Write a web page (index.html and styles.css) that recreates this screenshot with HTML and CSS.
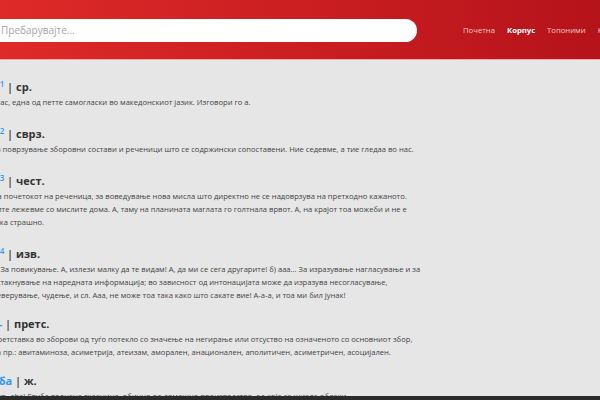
FILE: index.html
```html
<!DOCTYPE html>
<html lang="mk">
<head>
    <meta charset="UTF-8">
    <meta name="viewport" content="width=device-width, initial-scale=1.0">
    <title>Корпус</title>
    <link rel="stylesheet" href="styles.css">
</head>
<body>
    <div class="page">
        <!-- Top bar -->
        <header class="topbar">
            <div class="search">
                <input type="text" placeholder="Пребарувајте...">
            </div>
            <nav class="menu">
                <a href="#">Почетна</a>
                <a href="#" class="active">Корпус</a>
                <a href="#">Топоними</a>
                <a href="#">Контакт</a>
            </nav>
        </header>

        <!-- Dictionary entries -->
        <main class="entries">
            <div class="entry">
                <h3><span class="word">а<sup>1</sup></span> <span class="bar">|</span> ср.</h3>
                <p>Глас, една од петте самогласки во македонскиот јазик. Изговори го а.</p>
            </div>
            <div class="entry">
                <h3><span class="word">а<sup>2</sup></span> <span class="bar">|</span> сврз.</h3>
                <p>За поврзување зборовни состави и реченици што се содржински сопоставени. Ние седевме, а тие гледаа во нас.</p>
            </div>
            <div class="entry">
                <h3><span class="word">а<sup>3</sup></span> <span class="bar">|</span> чест.</h3>
                <p>На почетокот на реченица, за воведување нова мисла што директно не се надоврзува на претходно кажаното. Сите лежевме со мислите дома. А, таму на планината маглата го голтнала врвот. А, на крајот тоа можеби и не е така страшно.</p>
            </div>
            <div class="entry">
                <h3><span class="word">а<sup>4</sup></span> <span class="bar">|</span> изв.</h3>
                <p>а) За повикување. А, излези малку да те видам! А, да ми се сега другарите! б) ааа... За изразување нагласување и за истакнување на наредната информација; во зависност од интонацијата може да изразува несогласување, неверување, чудење, и сл. Ааа, не може тоа така како што сакате вие! А-а-а, и тоа ми бил јунак!</p>
            </div>
            <div class="entry">
                <h3><span class="word">а-</span> <span class="bar">|</span> претс.</h3>
                <p>Претставка во зборови од туѓо потекло со значење на негирање или отсуство на означеното со основниот збор, на пр.: авитаминоза, асиметрија, атеизам, аморален, анационален, аполитичен, асиметричен, асоцијален.</p>
            </div>
            <div class="entry">
                <h3><span class="word">аба</span> <span class="bar">|</span> ж.</h3>
                <p>(тур. aba) Груба волнена ткаенина, обично од домашно производство, од која се шиеле облеки.</p>
            </div>
        </main>
    </div>

    <div class="strip"></div>
</body>
</html>
```

FILE: styles.css
```css
* {
    margin: 0;
    padding: 0;
    box-sizing: border-box;
}
body {
    font-family: 'Open Sans', 'Noto Sans', sans-serif;
    background-color: #e6e6e6;
    color: #444;
    width: 600px;
    height: 400px;
    overflow: hidden;
}
.page {
    width: 640px;
    margin-left: -12px;
}
.topbar {
    height: 60px;
    display: flex;
    align-items: center;
    background: linear-gradient(90deg, #df2a29, #c81d20 55%, #b3121a);
    border-bottom: 1px solid #e9a9a9;
}
.search {
    width: 431px;
    margin-left: -2px;
}
.search input {
    width: 100%;
    height: 23px;
    border: none;
    border-radius: 12px;
    padding: 0 4px 0 15px;
    font-family: inherit;
    font-size: 10px;
    color: #333;
    background: #fff;
    outline: none;
}
.search input::placeholder {
    color: #a6a6a6;
}
.menu {
    display: flex;
    gap: 12px;
    margin-left: 46px;
}
.menu a {
    color: #f3c9c9;
    font-size: 7.7px;
    text-decoration: none;
    white-space: nowrap;
}
.menu a.active {
    color: #fff;
    font-weight: 700;
}
.entries {
    width: 434px;
    padding: 15px 0 0 4px;
}
.entry {
    margin-bottom: 13px;
}
.entry h3 {
    font-size: 11px;
    line-height: 18px;
    font-weight: 700;
    color: #333;
}
.entry h3 .word {
    color: #3497f5;
}
.entry h3 sup {
    font-size: 8px;
    font-weight: 600;
    vertical-align: 4px;
    margin-left: 1px;
}
.entry h3 .bar {
    font-weight: 600;
    color: #333;
}
.entry p {
    font-size: 7.6px;
    line-height: 13px;
}
.strip {
    position: fixed;
    left: 0;
    right: 0;
    bottom: 0;
    height: 4px;
    background: #2b2b2b;
}
```
